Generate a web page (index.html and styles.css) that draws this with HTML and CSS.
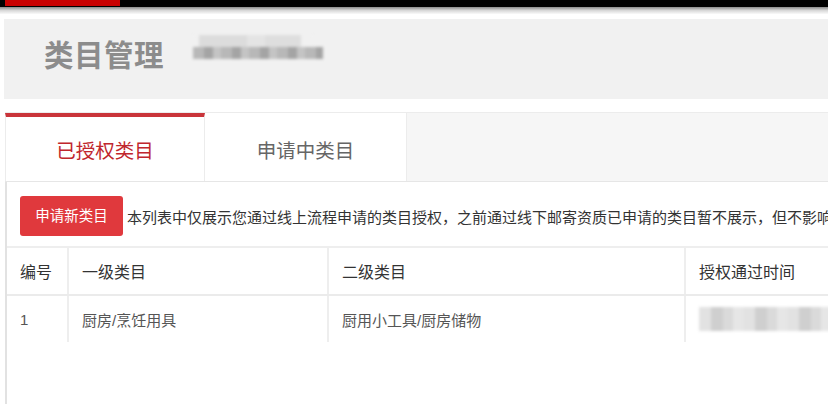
FILE: index.html
```html
<!DOCTYPE html>
<html lang="zh-CN">
<head>
    <meta charset="UTF-8">
    <title>类目管理</title>
    <link rel="stylesheet" href="styles.css">
</head>
<body>
    <!-- 顶部导航条 -->
    <div class="top-bar">
        <div class="top-bar-active"></div>
    </div>
    <div class="top-shadow"></div>

    <div class="page">
        <!-- 标题区域 -->
        <div class="page-header">
            <div class="page-title">类目管理</div>
            <div class="blur-text">
                <div class="blur-row blur-row-light"></div>
                <div class="blur-row blur-row-dark"></div>
            </div>
        </div>

        <!-- 选项卡 -->
        <div class="tabs">
            <div class="tab tab-active">已授权类目</div>
            <div class="tab">申请中类目</div>
            <div class="tab-fill"></div>
        </div>

        <!-- 内容 -->
        <div class="tab-content">
            <div class="toolbar">
                <div class="btn-apply">申请新类目</div>
                <div class="toolbar-note">本列表中仅展示您通过线上流程申请的类目授权，之前通过线下邮寄资质已申请的类目暂不展示，但不影响</div>
            </div>

            <table class="cat-table">
                <thead>
                    <tr>
                        <th class="col-no">编号</th>
                        <th class="col-first">一级类目</th>
                        <th class="col-second">二级类目</th>
                        <th class="col-time">授权通过时间</th>
                    </tr>
                </thead>
                <tbody>
                    <tr>
                        <td>1</td>
                        <td>厨房/烹饪用具</td>
                        <td>厨用小工具/厨房储物</td>
                        <td><div class="blur-time"></div></td>
                    </tr>
                </tbody>
            </table>
        </div>
    </div>
</body>
</html>
```

FILE: styles.css
```css
/* 全局样式 */
* {
    margin: 0;
    padding: 0;
    box-sizing: border-box;
}

body {
    font-family: "Liberation Sans", "Noto Sans CJK SC", sans-serif;
    background: #fff;
    width: 828px;
    height: 404px;
    overflow: hidden;
}

/* 顶部导航条 */
.top-bar {
    height: 7px;
    background: #000;
    padding-left: 5px;
}

.top-bar-active {
    width: 115px;
    height: 6px;
    background: #c80000;
}

.top-shadow {
    height: 7px;
    background: linear-gradient(#8a8a8a, #d8d8d8 50%, #fafafa);
}

.page {
    padding: 5px 0 0 4px;
}

/* 标题区域 */
.page-header {
    height: 80px;
    background: #f1f1f1;
    display: flex;
    align-items: flex-start;
    padding: 19px 0 0 40px;
}

.page-title {
    font-size: 29.5px;
    line-height: 36px;
    font-weight: bold;
    color: #8c8c8c;
    letter-spacing: 0.5px;
}

.blur-text {
    margin: -3px 0 0 29px;
    width: 132px;
    filter: blur(1.5px);
}

.blur-row {
    height: 12px;
}

.blur-row-light {
    background: linear-gradient(90deg, #f1f1f1 0 5%, #dcdcdc 5% 45%, #e4e4e4 45% 60%, #dedede 60% 90%, #f1f1f1 90%);
    width: 120px;
}

.blur-row-dark {
    background: repeating-linear-gradient(90deg, #b8b8b8 0 11px, #a4a4a4 11px 20px, #c4c4c4 20px 28px);
    width: 130px;
}

/* 选项卡 */
.tabs {
    display: flex;
    height: 70px;
    margin: 13px 0 0 1px;
    border-top: 1px solid #ececec;
    border-bottom: 1px solid #e6e6e6;
    background: #f6f6f6;
}

.tab {
    width: 202px;
    display: flex;
    align-items: center;
    justify-content: center;
    background: #fff;
    border-right: 1px solid #ececec;
    font-size: 19.5px;
    color: #666;
    padding-top: 4px;
}

.tab-active {
    width: 200px;
    color: #c0262d;
    border-top: 4px solid #c9343a;
    border-left: 1px solid #ececec;
    padding-top: 0;
}

.tab-fill {
    flex: 1;
}

/* 内容 */
.tab-content {
    margin-left: 1px;
    border-left: 2px solid #e2e2e2;
    height: 240px;
}

.toolbar {
    display: flex;
    align-items: center;
    padding: 14px 0 0 13px;
    white-space: nowrap;
    overflow: hidden;
}

.btn-apply {
    width: 103px;
    height: 40px;
    line-height: 40px;
    text-align: center;
    background: #e0393d;
    color: #fff;
    font-size: 14.5px;
    border-radius: 3px;
    flex-shrink: 0;
}

.toolbar-note {
    margin-left: 4px;
    font-size: 15px;
    color: #333;
}

/* 表格 */
.cat-table {
    margin-top: 10px;
    border-collapse: collapse;
    width: 900px;
    border-top: 2px solid #eeeeee;
}

.cat-table th,
.cat-table td {
    text-align: left;
    font-weight: normal;
    border-right: 2px solid #eeeeee;
    padding: 0 0 0 13px;
    white-space: nowrap;
}

.cat-table th {
    height: 48px;
    font-size: 16px;
    color: #333;
    border-bottom: 2px solid #ebebeb;
}

.cat-table td {
    height: 47px;
    font-size: 15px;
    color: #555;
}

.col-no {
    width: 61px;
}

.col-first {
    width: 260px;
}

.col-second {
    width: 357px;
}

.blur-time {
    width: 140px;
    height: 24px;
    filter: blur(1.5px);
    background: repeating-linear-gradient(90deg, #e2e2e2 0 12px, #cfcfcf 12px 24px, #dadada 24px 34px, #e6e6e6 34px 44px);
}
```
